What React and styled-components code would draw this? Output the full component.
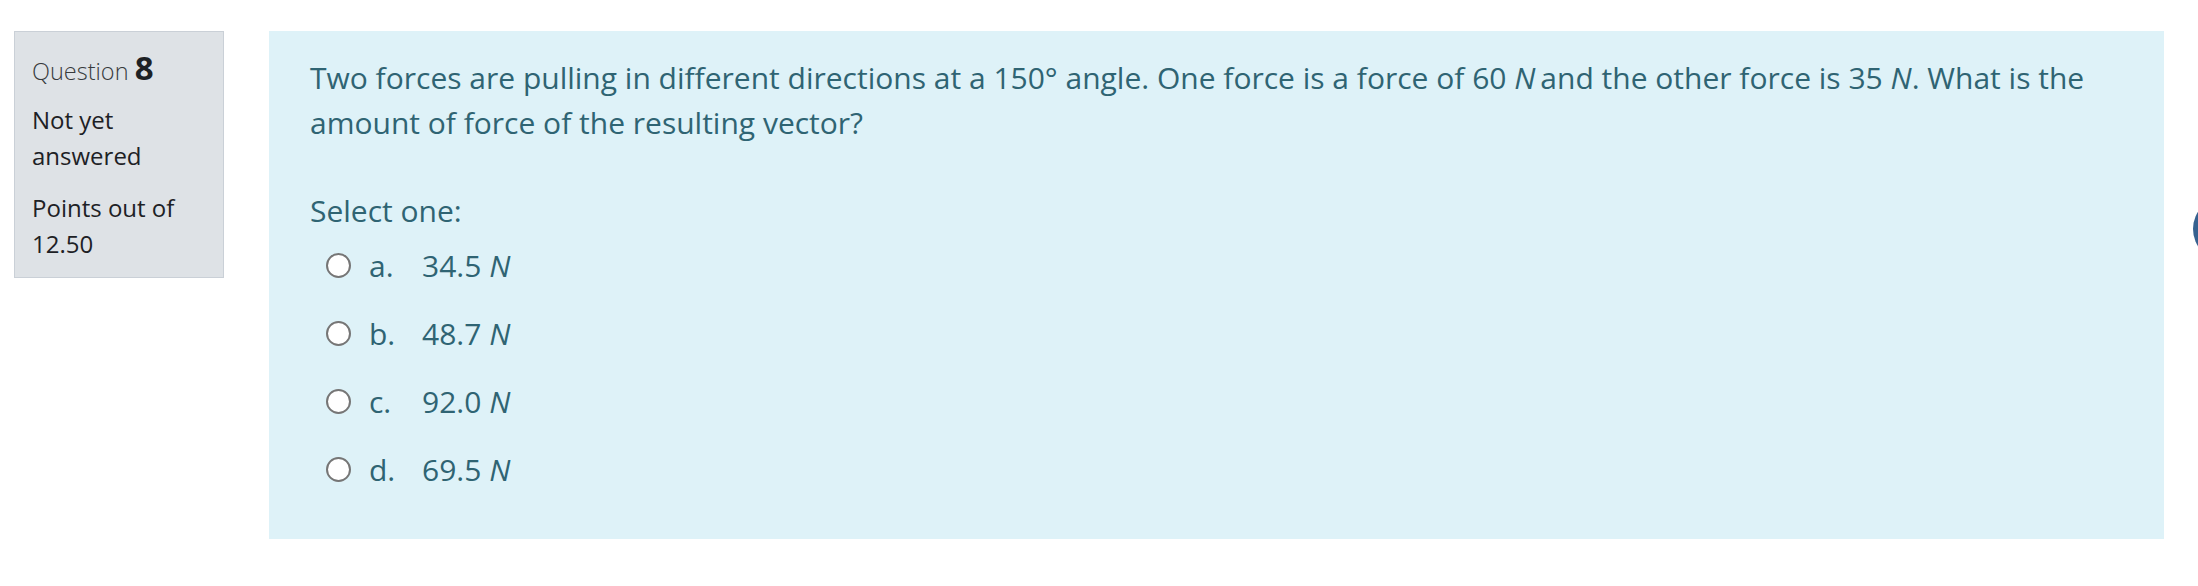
import styled, { createGlobalStyle } from 'styled-components'

const GlobalStyle = createGlobalStyle`
    html, body {
        margin: 0;
        padding: 0;
        background: #fff;
    }
    body {
        font-family: "Open Sans", "Noto Sans", sans-serif;
        color: #373a3c;
    }
`

const options = [
    { letter: 'a.', value: '34.5' },
    { letter: 'b.', value: '48.7' },
    { letter: 'c.', value: '92.0' },
    { letter: 'd.', value: '69.5' },
]

const Page = styled.div`
    position: relative;
    display: flex;
    align-items: flex-start;
    gap: 45px;
    padding: 31px 0 46px 14px;
    width: 2198px;
    height: 586px;
    box-sizing: border-box;
    overflow: hidden;
`

const Info = styled.div`
    box-sizing: border-box;
    width: 210px;
    height: 247px;
    padding: 18px 17px;
    background: #dee2e6;
    border: 1px solid #cad0d7;
    font-size: 24px;
    line-height: 36px;
    color: #1d2125;
`

const Heading = styled.h3`
    margin: 0 0 16px;
    font-size: 23.5px;
    font-weight: 300;
    line-height: 36px;
    height: 36px;
    color: #373a3c;

    & b {
        font-size: 33px;
        font-weight: 700;
        color: #1d2125;
    }
`

const State = styled.div`
    margin-bottom: 16px;
`

const Formulation = styled.div`
    box-sizing: border-box;
    width: 1895px;
    padding: 24px 41px 36px;
    background: #def2f8;
    color: #2f6473;
    font-size: 30px;
    line-height: 45px;
`

const QText = styled.p`
    margin: 0 0 46px;
`

const Prompt = styled.div`
    line-height: 40px;
`

const Answer = styled.div`
    display: flex;
    flex-direction: column;
`

const Row = styled.div`
    display: flex;
    align-items: center;
    height: 68px;
`

const Radio = styled.span`
    box-sizing: border-box;
    width: 25px;
    height: 25px;
    margin-left: 16px;
    border-radius: 50%;
    border: 2px solid #767676;
    background: #fff;
`

const Letter = styled.span`
    width: 53px;
    margin-left: 18px;
`

const Fab = styled.div`
    position: absolute;
    left: 2193px;
    top: 197px;
    width: 64px;
    height: 64px;
    border-radius: 50%;
    background: #36618f;
`

const App = () => (
    <Page>
        <GlobalStyle />
        <Info>
            <Heading>Question <b>8</b></Heading>
            <State>Not yet answered</State>
            <div>Points out of 12.50</div>
        </Info>
        <Formulation>
            <QText>
                Two forces are pulling in different directions at a 150° angle. One force is a force of 60 <i>N</i>&thinsp;and
                the other force is 35 <i>N</i>. What is the amount of force of the resulting vector?
            </QText>
            <Prompt>Select one:</Prompt>
            <Answer>
                {options.map(({ letter, value }) => (
                    <Row key={letter}>
                        <Radio />
                        <Letter>{letter}</Letter>
                        <span>{value} <i>N</i></span>
                    </Row>
                ))}
            </Answer>
        </Formulation>
        <Fab />
    </Page>
)

export default App
